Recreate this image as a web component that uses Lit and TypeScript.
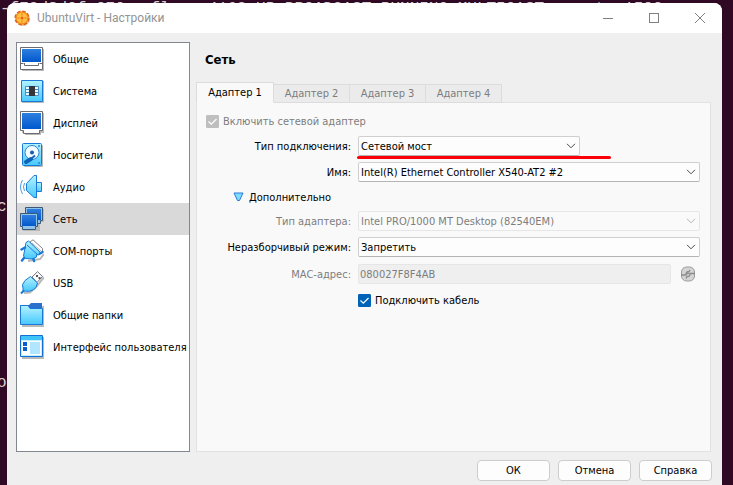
import { LitElement, html, css, svg } from "lit";
import { customElement, property, state } from "lit/decorators.js";
import { classMap } from "lit/directives/class-map.js";

const shadow = "#b9b9b9";

const gradients = svg`
  <defs>
    <linearGradient id="screen" x1="0" y1="0" x2="0" y2="1">
      <stop offset="0" stop-color="#2f7fe0" /><stop offset="1" stop-color="#0058cc" />
    </linearGradient>
    <linearGradient id="cyan" x1="0" y1="0" x2="0" y2="1">
      <stop offset="0" stop-color="#b4f2ff" /><stop offset="1" stop-color="#46c8fb" />
    </linearGradient>
  </defs>`;

const icons: Record<string, unknown> = {
  general: svg`
    <path d="M2 2H24V24H2Z" fill="${shadow}" />
    <path d="M.5 .5H22.500V22.500H.5Z" fill="#fff" stroke="#6b6b70" />
    <path d="M2 2H21V15H2Z" fill="url(#screen)" />
    <path d="M.5 16.500H3.500M19.500 16.500H22.500M4.500 16V18.500H18.500V16" fill="none" stroke="#6b6b70" />`,
  system: svg`
    <path d="M2 2H24V24H2Z" fill="${shadow}" />
    <path d="M1.500 1.500H22.500V22.500H1.500Z" fill="url(#cyan)" stroke="#1a78d8" />
    <path d="M5.500 7.500H18.500V16.500H5.500Z" fill="#eafaff" stroke="#4a8cc4" />
    <path d="M5 10.500H19M5 13.500H19" stroke="#4a8cc4" />
    <path d="M9 7H15V17H9Z" fill="#35363c" />`,
  display: svg`
    <path d="M2 2H24V22H21V24H5V22H2Z" fill="${shadow}" />
    <path d="M.5 .5H22.500V19.500H19.500V22.500H3.500V19.500H.5Z" fill="#fff" stroke="#6b6b70" />
    <path d="M2 2H21V18H2Z" fill="url(#screen)" />`,
  storage: svg`
    <rect x="4" y="2" width="19" height="22" rx="1" fill="${shadow}" />
    <rect x="2.500" y=".5" width="19" height="22" rx="1" fill="url(#cyan)" stroke="#1a78d8" />
    <circle cx="12" cy="9.500" r="7" fill="#f4fcff" stroke="#2a84d4" />
    <circle cx="12" cy="9.500" r="2" fill="#1a5fa8" />
    <path d="M15 12.500L11 16" stroke="#1a68c0" stroke-width="2" />
    <path d="M11 16L6 19" stroke="#0f62b8" stroke-width="4" stroke-linecap="round" />
    <circle cx="19" cy="3" r="1" fill="#2a84d4" /><circle cx="19" cy="20" r="1" fill="#2a84d4" />`,
  audio: svg`
    <path d="M8 9L17 2V24L8 17Z" fill="${shadow}" />
    <path d="M16 7.500H21.500V16.500H16Z" fill="url(#cyan)" stroke="#1a78d8" />
    <path d="M6.500 8.500L14 .5H16.500V22.500H14L6.500 15.500Z" fill="url(#cyan)" stroke="#1a78d8" />
    <path d="M4.500 8Q2.500 12 4.500 16M2.500 5Q-1.500 12 2.500 19" fill="none" stroke="#4a9ae0" />`,
  network: svg`
    <path d="M7 2H24V15H20V24H3V12H7Z" fill="${shadow}" />
    <path d="M5.500 .5H22.500V13.500H20.500V16.500H7.500V13.500H5.500Z" fill="#8fc4e8" stroke="#3c5878" />
    <path d="M7 2H21V13H7Z" fill="url(#screen)" />
    <path d="M.5 6.500H17.500V19.500H15.500V22.500H2.500V19.500H.5Z" fill="#8fc4e8" stroke="#3c5878" />
    <path d="M2 8H16V19H2Z" fill="url(#screen)" />`,
  serial: svg`
    <path d="M8 22L20 20L24 15" fill="none" stroke="${shadow}" stroke-width="2" />
    <path d="M10 3L13 .8L22.500 9.500V12.500L20 15Z" fill="#fff" stroke="#808088" />
    <path d="M12 4L21 12" stroke="#b0b0b4" />
    <path d="M6 3.500L8.500 2L21 14L19 16L16.500 15.500V18L12.500 20L5.500 19.500L3.500 17L5 9Z" fill="url(#cyan)" stroke="#1a78d8" />
    <path d="M7 6L18 16" stroke="#1a78d8" />
    <path d="M1.500 10.500L5 8.500M4 19L2 21.500M13.500 20L14 22M20 14.500L22.500 13" stroke="#1a78d8" stroke-width="2.500" stroke-linecap="round" />`,
  usb: svg`
    <path d="M4 22L10 21.500L17 15L24 6" fill="none" stroke="${shadow}" stroke-width="2" />
    <path d="M12 6L17.500 .7L22.500 5.500L17 11.500Z" fill="#fff" stroke="#707078" />
    <path d="M16 4h2v2h-2zM18.500 6h2v2h-2z" fill="#55555c" />
    <path d="M10.500 5.500L17.500 12L16 16.500Q11 21.500 5 20L3 20.500V17Q1 14 5 9.500Z" fill="url(#cyan)" stroke="#1a78d8" />
    <path d="M4 19.500L1 22.500" stroke="#1a78d8" stroke-width="2" />`,
  folder: svg`
    <path d="M2 3H24V24H2Z" fill="${shadow}" />
    <path d="M0 2H9L11 0H22V6H0Z" fill="#2a70cc" />
    <path d="M.5 2.500H8L10 5.500H22.500V21.500H.5Z" fill="url(#cyan)" stroke="#1a78d8" />`,
  ui: svg`
    <path d="M2 2H24V24H2Z" fill="${shadow}" />
    <path d="M.5 .5H22.500V21.500H.5Z" fill="#c4f0ff" stroke="#1070d8" />
    <path d="M1 1H22V5H1Z" fill="#40c4f8" />
    <path d="M2 6H21V20H2Z" fill="#fff" />
    <path d="M3 7H7V11H3ZM3 12H7V16H3Z" fill="#0860d0" />
    <path d="M10 7H20V19H10Z" fill="#b0e6ff" />`,
};

const sections = [
  ["general", "Общие"],
  ["system", "Система"],
  ["display", "Дисплей"],
  ["storage", "Носители"],
  ["audio", "Аудио"],
  ["network", "Сеть"],
  ["serial", "COM-порты"],
  ["usb", "USB"],
  ["folder", "Общие папки"],
  ["ui", "Интерфейс пользователя"],
];

@customElement("combo-box")
export class ComboBox extends LitElement {
  @property() label = "";
  @property() value = "";
  @property({ type: Boolean }) disabled = false;

  static styles = css`
    :host {
      display: grid;
      align-items: center;
      min-width: 0;
    }
    .select {
      grid-area: 1 / 1;
      appearance: none;
      width: 100%;
      height: 20px;
      margin: 0;
      padding: 2px 20px 0 2px;
      font: inherit;
      color: #000;
      background: #fdfdfd;
      border: 1px solid #cfcfcf;
      border-bottom-color: #b4b4b4;
      border-radius: 2px;
    }
    .select:disabled {
      color: #7d7d7d;
      opacity: 1;
      background: #fafafa;
      border-color: #e6e6e6;
    }
    .arrow {
      grid-area: 1 / 1;
      justify-self: end;
      margin-right: 4px;
      pointer-events: none;
      stroke: #4a4a4a;
      fill: none;
    }
    .select:disabled + .arrow {
      stroke: #b4b4b4;
    }
  `;

  render() {
    return html`
      <select class="select" aria-label=${this.label} ?disabled=${this.disabled}>
        <option>${this.value}</option>
      </select>
      <svg class="arrow" width="10" height="6"><path d="M1 .8L5 4.800L9 .8" /></svg>
    `;
  }
}

@customElement("check-box")
export class CheckBox extends LitElement {
  @property() label = "";
  @property({ type: Boolean }) disabled = false;

  static styles = css`
    :host {
      display: flex;
    }
    .label {
      display: flex;
      align-items: center;
      gap: 4px;
      height: 18px;
      color: #000;
    }
    .label.disabled {
      color: #7d7d7d;
    }
    .text {
      padding-top: 2px;
    }
    .mark {
      display: grid;
    }
    .box {
      grid-area: 1 / 1;
      appearance: none;
      width: 13px;
      height: 13px;
      margin: 0;
      background: #fff;
      border: 1px solid #888;
      border-radius: 1px;
    }
    .box:checked {
      background: #0063b8;
      border-color: #0063b8;
    }
    .box:disabled {
      background: #bfbfbf;
      border-color: #bfbfbf;
    }
    .tick {
      grid-area: 1 / 1;
      fill: none;
      stroke: #fff;
      visibility: hidden;
      pointer-events: none;
    }
    .box:checked + .tick {
      visibility: visible;
    }
  `;

  render() {
    return html`
      <label class=${classMap({ label: true, disabled: this.disabled })}>
        <span class="mark">
          <input class="box" type="checkbox" checked ?disabled=${this.disabled} />
          <svg class="tick" width="13" height="13"><path d="M2.500 6.500L5.300 9.200L10.500 4" stroke-width="1.200" /></svg>
        </span>
        <span class="text">${this.label}</span>
      </label>
    `;
  }
}

@customElement("app-root")
export class AppRoot extends LitElement {
  @state() private section = "network";
  @state() private tab = 1;

  static styles = css`
    :host {
      display: flex;
      flex-direction: column;
      position: relative;
      box-sizing: border-box;
      min-height: 100vh;
      padding: 3px 11px 0 7px;
      overflow: hidden;
      background: #300a24;
      font: 11px/16px "DejaVu Sans Condensed", Tahoma, "Noto Sans", sans-serif;
      color: #000;
    }
    * {
      box-sizing: border-box;
    }
    .terminal {
      position: absolute;
      inset: 0;
      overflow: hidden;
      font: 16px/22px "Liberation Mono", monospace;
      color: #d8d2d6;
    }
    .line {
      position: absolute;
      display: flex;
      white-space: pre;
    }
    .line.top {
      top: -2px;
      left: 0;
      gap: 16px;
    }
    .line.mid {
      top: 196px;
      left: -3px;
    }
    .line.low {
      top: 372px;
      left: -3px;
    }
    .mtu {
      margin-left: 16px;
    }
    .window {
      position: relative;
      display: flex;
      flex-direction: column;
      flex: 1;
      background: #efefef;
      border-radius: 8px 8px 0 0;
      overflow: hidden;
    }
    .titlebar {
      display: flex;
      align-items: center;
      height: 30px;
      padding: 0 16px 0 7px;
      gap: 6px;
      background: #fff;
      color: #949494;
    }
    .title {
      flex: 1;
      margin: 0;
      font: 12px/16px Roboto, sans-serif;
    }
    .controls {
      display: flex;
      gap: 34px;
    }
    .control {
      display: flex;
      width: 12px;
      height: 12px;
      padding: 0;
      border: 0;
      background: none;
      stroke: #808080;
      fill: none;
    }
    .body {
      display: flex;
      flex: 1;
      gap: 6px;
      padding: 9px 11px 0 9px;
    }
    .sidebar {
      flex: 0 0 174px;
      min-width: 0;
      background: #fff;
      border: 1px solid #828790;
    }
    .item {
      display: flex;
      align-items: center;
      gap: 9px;
      width: 100%;
      height: 32px;
      padding: 0 0 0 3px;
      border: 0;
      background: none;
      font: inherit;
      color: inherit;
      text-align: left;
      white-space: nowrap;
    }
    .item.selected {
      background: #d9d9d9;
    }
    .name {
      padding-top: 2px;
    }
    .main {
      display: flex;
      flex: 1;
      flex-direction: column;
      min-width: 0;
    }
    .heading {
      height: 34px;
      margin: 0 0 6px 9px;
      padding-top: 1px;
      font-size: 13px;
      line-height: 34px;
      font-weight: bold;
    }
    .tabs {
      display: flex;
      align-items: flex-end;
      height: 21px;
      position: relative;
      z-index: 1;
      margin-bottom: -1px;
    }
    .tab {
      width: 76px;
      height: 19px;
      padding: 1px 0 0;
      border: 1px solid #dcdcdc;
      border-left-width: 0;
      background: #ebebeb;
      font: inherit;
      color: #7d7d7d;
    }
    .tab.active {
      width: 78px;
      height: 21px;
      border-left-width: 1px;
      border-bottom-color: #f9f9f9;
      background: #f9f9f9;
      color: #000;
    }
    .panel {
      flex: 1;
      padding: 9px 10px 9px 9px;
      background: #f9f9f9;
      border: 1px solid #e2e2e2;
    }
    .form {
      display: grid;
      grid-template-columns: 145px 1fr;
      gap: 6px 7px;
      align-items: center;
    }
    .wide {
      grid-column: 1 / -1;
    }
    .label {
      padding-top: 2px;
      text-align: right;
      white-space: nowrap;
    }
    .muted {
      color: #7d7d7d;
    }
    .marked {
      position: relative;
      width: 65%;
    }
    .underline {
      position: absolute;
      left: -1px;
      right: -31px;
      bottom: -3px;
      height: 3px;
      border-radius: 2px;
      background: #fb0007;
    }
    .disclosure {
      display: flex;
      align-items: center;
      gap: 5px;
      height: 17px;
      padding: 0 0 0 27px;
      border: 0;
      background: none;
      font: inherit;
      color: inherit;
    }
    .mac {
      display: flex;
      align-items: center;
      gap: 9px;
      height: 22px;
    }
    .field {
      flex: 1;
      min-width: 0;
      height: 20px;
      padding: 1px 1px 0;
      border: 1px solid #e6e6e6;
      border-radius: 2px;
      background: #efefef;
      font: inherit;
      color: #7d7d7d;
    }
    .refresh {
      display: flex;
      width: 16px;
      height: 16px;
      margin-right: 4px;
      padding: 0;
      border: 0;
      background: none;
    }
    .footer {
      display: flex;
      justify-content: flex-end;
      gap: 8px;
      padding: 8px 10px 4px;
    }
    .button {
      width: 73px;
      height: 21px;
      padding: 1px 0 0;
      border: 1px solid #cdcdcd;
      border-radius: 4px;
      background: #fdfdfd;
      font: inherit;
      color: #000;
    }
  `;

  render() {
    return html`
      <div class="terminal">
        <div class="line top">
          <span>-f70d8d0fc070:</span><span>flags=4163&lt;UP,BROADCAST,RUNNING,MULTICAST&gt;</span><span class="mtu">mtu 1500</span>
        </div>
        <span class="line mid">c</span>
        <span class="line low">o</span>
      </div>
      <div class="window">
        <header class="titlebar">
          <svg width="17" height="17" viewBox="0 0 17 17">
            <circle cx="9" cy="9" r="7" fill="#d8ccc0" />
            <circle cx="8" cy="8" r="6.800" fill="#ffa92e" stroke="#e0641c" stroke-width="1.600" stroke-dasharray="3.600 1.740" />
            <circle cx="8" cy="8" r="5.800" fill="#ffc040" stroke="#f08a20" />
            <circle cx="8" cy="8" r="1.500" fill="#e8601c" />
            <path d="M8 3.500v2M8 10.500v2M3.500 8h2M10.500 8h2" stroke="#e8701c" />
          </svg>
          <h1 class="title">UbuntuVirt - Настройки</h1>
          <div class="controls">
            <button class="control" aria-label="Свернуть"><svg width="12" height="12"><path d="M1 6.500H11" /></svg></button>
            <button class="control" aria-label="Развернуть"><svg width="12" height="12"><rect x="1.500" y="1.500" width="9" height="9" /></svg></button>
            <button class="control" aria-label="Закрыть"><svg width="12" height="12"><path d="M1 1L11 11M11 1L1 11" /></svg></button>
          </div>
        </header>
        <div class="body">
          <nav class="sidebar">
            ${sections.map(
              ([id, name]) => html`
                <button
                  class=${classMap({ item: true, selected: id === this.section })}
                  @click=${() => (this.section = id)}
                >
                  <svg width="24" height="24" viewBox="0 0 24 24">${gradients}${icons[id]}</svg>
                  <span class="name">${name}</span>
                </button>
              `
            )}
          </nav>
          <main class="main">
            <h2 class="heading">Сеть</h2>
            <div class="tabs" role="tablist">
              ${[1, 2, 3, 4].map(
                (n) => html`
                  <button
                    role="tab"
                    aria-selected=${n === this.tab}
                    class=${classMap({ tab: true, active: n === this.tab })}
                    @click=${() => (this.tab = n)}
                  >Адаптер ${n}</button>
                `
              )}
            </div>
            <section class="panel">
              <div class="form">
                <check-box class="wide" label="Включить сетевой адаптер" disabled></check-box>
                <span class="label">Тип подключения:</span>
                <div class="marked">
                  <combo-box label="Тип подключения" value="Сетевой мост"></combo-box>
                  <span class="underline"></span>
                </div>
                <span class="label">Имя:</span>
                <combo-box label="Имя" value="Intel(R) Ethernet Controller X540-AT2 #2"></combo-box>
                <button class="disclosure wide" aria-expanded="true">
                  <svg width="11" height="10"><path d="M1 1H10L6.500 8.500H4.500Z" fill="#7fdcff" stroke="#2a78d8" stroke-linejoin="round" /></svg>
                  <span class="name">Дополнительно</span>
                </button>
                <span class="label muted">Тип адаптера:</span>
                <combo-box label="Тип адаптера" value="Intel PRO/1000 MT Desktop (82540EM)" disabled></combo-box>
                <span class="label">Неразборчивый режим:</span>
                <combo-box label="Неразборчивый режим" value="Запретить"></combo-box>
                <label class="label muted" for="mac">MAC-адрес:</label>
                <div class="mac">
                  <input class="field" id="mac" type="text" value="080027F8F4AB" disabled />
                  <button class="refresh" aria-label="Обновить MAC-адрес" disabled>
                    <svg width="16" height="16" viewBox="0 0 16 16">
                      <rect x="1.500" y="1" width="13" height="14" rx="5" fill="#d4d4d4" stroke="#9a9a9a" />
                      <path d="M1 9H6Q6 5.500 9 5.500L10 4M15 7.500H10Q10 11 7 10.500L6 12.500M7 8L9 7" fill="none" stroke="#8a8a8a" stroke-width="1.300" />
                    </svg>
                  </button>
                </div>
                <span></span>
                <check-box label="Подключить кабель"></check-box>
              </div>
            </section>
          </main>
        </div>
        <footer class="footer">
          <button class="button">ОК</button>
          <button class="button">Отмена</button>
          <button class="button">Справка</button>
        </footer>
      </div>
    `;
  }
}
